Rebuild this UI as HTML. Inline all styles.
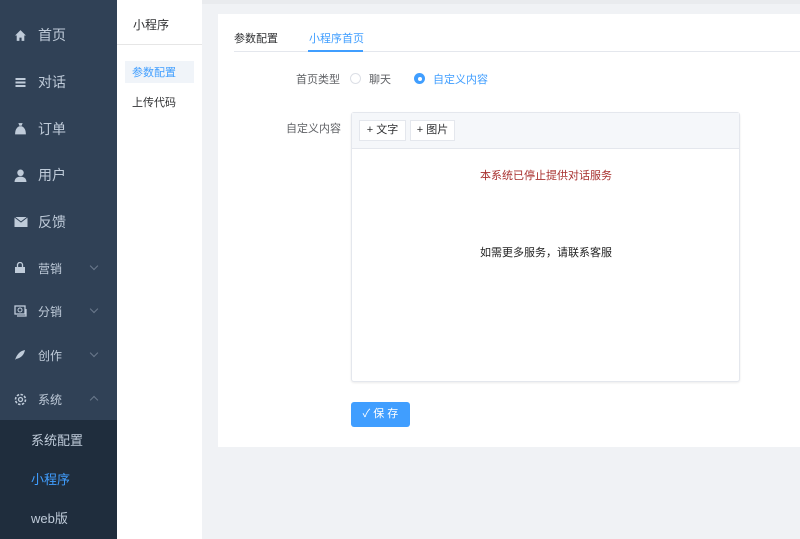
<!DOCTYPE html>
<html><head><meta charset="utf-8"><style>
*{margin:0;padding:0;box-sizing:border-box}
body{width:800px;height:539px;overflow:hidden;background:#f0f2f5;font-family:"Liberation Sans","Noto Sans CJK SC",sans-serif;position:relative;font-size:12px;color:#303133}
.sb{position:absolute;left:0;top:0;width:117px;height:539px;background:#304156}
.it{position:absolute;left:0;width:117px;color:#bfcbd9;font-size:14px;display:flex;align-items:center}
.it svg{position:absolute;left:14px}
.it span{position:absolute;left:38px}
.sm{font-size:12px}
.arr{position:absolute;left:91px;width:6px;height:6px;border-right:1px solid #6b7a8c;border-bottom:1px solid #6b7a8c;transform:rotate(45deg)}
.up{transform:rotate(-135deg)}
.sub{position:absolute;left:0;top:420px;width:117px;height:119px;background:#1f2d3d}
.sub div{position:absolute;left:31px;font-size:13px;color:#bfcbd9}
.c2{position:absolute;left:117px;top:0;width:85px;height:539px;background:#fff}
.card{position:absolute;left:218px;top:14px;width:582px;height:433px;background:#fff}
</style></head><body>
<div style="position:absolute;left:202px;top:0;width:598px;height:4px;background:#e9ebee"></div>
<div class="sb">
 <div class="it" style="top:26px;height:18px"><svg width="13" height="13" viewBox="0 0 12 12"><path d="M6 1L1 6h1.5v5h2.5V8h2v3h2.5V6H11z" fill="#bfcbd9"/></svg><span>首页</span></div>
 <div class="it" style="top:73px;height:18px"><svg width="13" height="12" viewBox="0 0 12 12"><rect x="1" y="2" width="10" height="2" fill="#bfcbd9"/><rect x="1" y="5.5" width="10" height="2" fill="#bfcbd9"/><rect x="1" y="9" width="10" height="2" fill="#bfcbd9"/></svg><span>对话</span></div>
 <div class="it" style="top:120px;height:18px"><svg width="13" height="14" viewBox="0 0 12 13"><path d="M4 1h4L7 3.5h-2zM5 4h2c3 1 4 4 4 7.5H1C1 8 2 5 5 4z" fill="#bfcbd9"/></svg><span>订单</span></div>
 <div class="it" style="top:166px;height:18px"><svg width="13" height="13" viewBox="0 0 12 12"><circle cx="6" cy="3.5" r="3" fill="#bfcbd9"/><path d="M0.5 12c0-3.5 2.5-5 5.5-5s5.5 1.5 5.5 5z" fill="#bfcbd9"/></svg><span>用户</span></div>
 <div class="it" style="top:213px;height:18px"><svg width="14" height="10" viewBox="0 0 13 10"><rect x="0" y="0" width="13" height="10" fill="#bfcbd9"/><path d="M0 0l6.5 5L13 0" stroke="#304156" fill="none"/></svg><span>反馈</span></div>
 <div class="it sm" style="top:260px;height:16px"><svg width="12" height="12" viewBox="0 0 12 12"><path d="M1 5h10v6H1z" fill="#bfcbd9"/><path d="M3.5 5V3a2.5 2.5 0 015 0v2" stroke="#bfcbd9" fill="none" stroke-width="1.3"/></svg><span>营销</span><i class="arr" style="top:3px"></i></div>
 <div class="it sm" style="top:303px;height:16px"><svg width="13" height="12" viewBox="0 0 13 12"><rect x="1" y="1" width="10" height="8" fill="none" stroke="#bfcbd9" stroke-width="1.3"/><circle cx="6" cy="5" r="2" fill="none" stroke="#bfcbd9"/><path d="M3 11h9V4" stroke="#bfcbd9" fill="none" stroke-width="1.3"/></svg><span>分销</span><i class="arr" style="top:3px"></i></div>
 <div class="it sm" style="top:347px;height:16px"><svg width="12" height="12" viewBox="0 0 12 12"><path d="M1 11C3 5 6 2 11 1 10 6 7 9 2 10z" fill="#bfcbd9"/></svg><span>创作</span><i class="arr" style="top:3px"></i></div>
 <div class="it sm" style="top:391px;height:16px"><svg width="13" height="13" viewBox="0 0 13 13"><circle cx="6.5" cy="6.5" r="5" fill="none" stroke="#bfcbd9" stroke-width="1.6" stroke-dasharray="2.5 1.4"/><circle cx="6.5" cy="6.5" r="2" fill="none" stroke="#bfcbd9" stroke-width="1.3"/></svg><span>系统</span><i class="arr up" style="top:6px"></i></div>
 <div class="sub">
  <div style="top:10px">系统配置</div>
  <div style="top:49px;color:#409eff">小程序</div>
  <div style="top:88px">web版</div>
 </div>
</div>
<div class="c2">
 <div style="position:absolute;left:16px;top:16px;font-size:12px;color:#303133">小程序</div>
 <div style="position:absolute;left:0;top:44px;width:85px;height:1px;background:#e6e6e6"></div>
 <div style="position:absolute;left:8px;top:61px;width:69px;height:22px;background:#f0f4f9"></div>
 <div style="position:absolute;left:15px;top:64px;font-size:11px;color:#409eff">参数配置</div>
 <div style="position:absolute;left:15px;top:94px;font-size:11px;color:#303133">上传代码</div>
</div>
<div class="card">
 <div style="position:absolute;left:16px;top:16px;font-size:11px">参数配置</div>
 <div style="position:absolute;left:91px;top:16px;font-size:11px;color:#409eff">小程序首页</div>
 <div style="position:absolute;left:16px;top:37px;width:566px;height:1px;background:#e4e7ed"></div>
 <div style="position:absolute;left:90px;top:36px;width:55px;height:2px;background:#409eff"></div>
 <div style="position:absolute;left:78px;top:57px;font-size:11px;color:#606266">首页类型</div>
 <div style="position:absolute;left:132px;top:59px;width:11px;height:11px;border:1px solid #dcdfe6;border-radius:50%"></div>
 <div style="position:absolute;left:151px;top:57px;font-size:11px;color:#606266">聊天</div>
 <div style="position:absolute;left:196px;top:59px;width:11px;height:11px;background:#409eff;border-radius:50%"><div style="position:absolute;left:3.5px;top:3.5px;width:4px;height:4px;background:#fff;border-radius:50%"></div></div>
 <div style="position:absolute;left:215px;top:57px;font-size:11px;color:#409eff">自定义内容</div>
 <div style="position:absolute;left:68px;top:106px;font-size:11px;color:#606266">自定义内容</div>
 <div style="position:absolute;left:133px;top:98px;width:389px;height:270px;border:1px solid #e4e7ed;border-radius:3px;background:#fff;box-shadow:0 1px 2px rgba(0,0,0,.08)">
  <div style="height:36px;background:#f5f7fa;border-bottom:1px solid #e4e7ed;position:relative">
   <div style="position:absolute;left:7px;top:7px;width:47px;height:21px;background:#fff;border:1px solid #e4e7ed;font-size:11px;text-align:center;line-height:19px">+ 文字</div>
   <div style="position:absolute;left:58px;top:7px;width:45px;height:21px;background:#fff;border:1px solid #e4e7ed;font-size:11px;text-align:center;line-height:19px">+ 图片</div>
  </div>
  <div style="position:absolute;left:128px;top:54px;font-size:11px;color:#a8302e">本系统已停止提供对话服务</div>
  <div style="position:absolute;left:128px;top:131px;font-size:11px;color:#222">如需更多服务，请联系客服</div>
 </div>
 <div style="position:absolute;left:133px;top:388px;width:59px;height:25px;background:#409eff;border-radius:3px;color:#fff;font-size:11px;text-align:center;line-height:25px">✓ 保 存</div>
</div>
</body></html>
